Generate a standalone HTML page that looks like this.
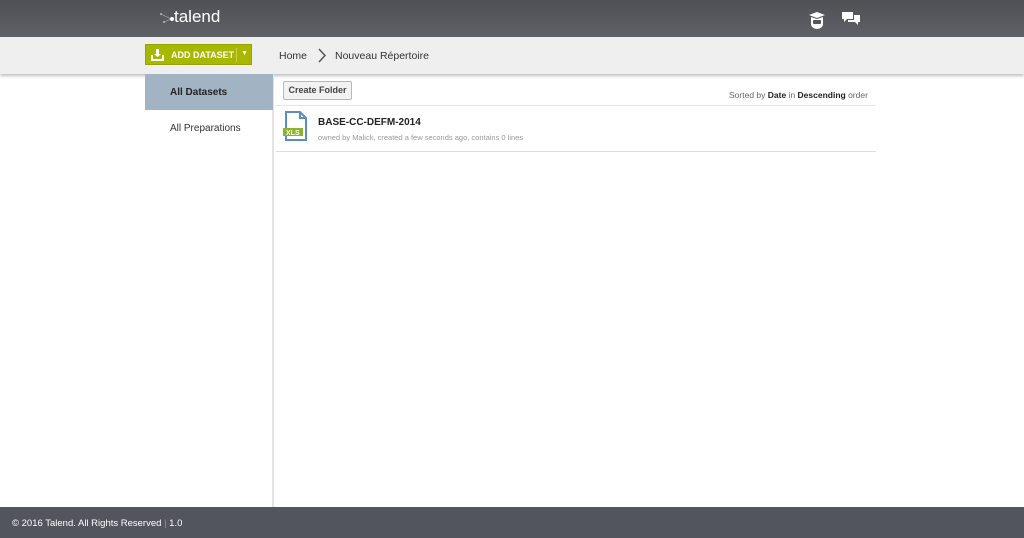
<!DOCTYPE html>
<html><head><meta charset="utf-8"><style>
*{margin:0;padding:0;box-sizing:border-box}
body{width:1024px;height:538px;overflow:hidden;background:#fff;font-family:"Liberation Sans",sans-serif;position:relative}
.hdr{position:absolute;left:0;top:0;width:1024px;height:37px;background:linear-gradient(#4f5056,#606167)}
.sub{position:absolute;left:0;top:37px;width:1024px;height:37px;background:#efefef;box-shadow:0 2px 3px rgba(0,0,0,.25)}
.btn{position:absolute;left:145px;top:7px;width:107px;height:21px;background:#a8b800;border:1px solid #95a400;color:#fff;font-size:9px;font-weight:bold}
.side{position:absolute;left:145px;top:74px;width:129px;height:433px;border-right:2px solid #e4e4e4}
.foot{position:absolute;left:0;top:507px;width:1024px;height:31px;background:#53555d;color:#fff;font-size:9.5px}
</style></head><body>
<div class="hdr">
<div style="position:absolute;left:160px;top:11px;width:14px;height:12px">
<svg width="14" height="12"><g stroke="#9a9ba0" stroke-width=".7"><line x1="1" y1="2" x2="11" y2="7"/><line x1="4" y1="10" x2="11" y2="7"/></g><circle cx="12" cy="7" r="2" fill="#fff"/><circle cx="1" cy="2" r="1" fill="#bbb"/><circle cx="4" cy="10" r="1" fill="#bbb"/></svg></div>
<div style="position:absolute;left:174px;top:7px;color:#fff;font-size:17px">talend</div>
<svg style="position:absolute;left:808px;top:11px" width="18" height="18"><path d="M1 4L9 1L17 4L9 7Z" fill="#fff"/><path d="M3 6v7a6 5 0 0 0 12 0V6L9 8Z" fill="#fff"/><rect x="5" y="9" width="8" height="4" rx="1" fill="#55565c"/></svg>
<svg style="position:absolute;left:841px;top:10px" width="20" height="18"><path d="M1 2h11v7H6l-3 3V9H1Z" fill="#fff"/><path d="M13 5h6v7h-2v3l-3-3H7v-2h6Z" fill="#fff"/></svg>
</div>
<div class="sub">
<div class="btn"><svg style="position:absolute;left:5px;top:4px" width="13" height="12"><path d="M0 6h2v4h9V6h2v6H0Z M5 0h3v5h2L6.5 8 3 5h2Z" fill="#fff"/></svg><span style="position:absolute;left:25px;top:5px">ADD DATASET</span><span style="position:absolute;left:90px;top:3px;width:1px;height:14px;background:#c8d24c"></span><span style="position:absolute;left:95px;top:5px;font-size:7px">▼</span></div>
<div style="position:absolute;left:279px;top:13px;font-size:10.5px;color:#333">Home</div>
<svg style="position:absolute;left:317px;top:11px" width="10" height="15"><path d="M2 1l6 6.5L2 14" stroke="#555" stroke-width="1.5" fill="none"/></svg>
<div style="position:absolute;left:335px;top:13px;font-size:10.5px;color:#333">Nouveau Répertoire</div>
</div>
<div class="side">
<div style="position:absolute;left:0;top:0;width:128px;height:36px;background:#a2b4c4;font-size:10px;font-weight:bold;color:#222;padding:13px 0 0 25px">All Datasets</div>
<div style="position:absolute;left:25px;top:49px;font-size:10px;color:#333">All Preparations</div>
</div>
<div style="position:absolute;left:283px;top:81px;width:69px;height:19px;border:1px solid #b8b8b8;border-radius:2px;background:#f2f2f2;font-size:9px;font-weight:bold;color:#444;text-align:center;line-height:17px">Create Folder</div>
<div style="position:absolute;left:729px;top:90px;font-size:8.5px;color:#666">Sorted by <b style="color:#222">Date</b> in <b style="color:#222">Descending</b> order</div>
<div style="position:absolute;left:276px;top:105px;width:600px;height:1px;background:#e6e6e6"></div>
<div style="position:absolute;left:276px;top:151px;width:600px;height:1px;background:#ddd"></div>
<svg style="position:absolute;left:283px;top:111px" width="26" height="30"><path d="M3 1h14l6 6v22H3Z" fill="#fff" stroke="#5b8fc0" stroke-width="2"/><path d="M17 1v6h6" fill="none" stroke="#5b8fc0" stroke-width="2"/><rect x="0" y="17" width="20" height="8" fill="#8db32a"/><text x="3" y="24" font-size="7" fill="#fff" font-family="Liberation Sans" font-weight="bold">XLS</text></svg>
<div style="position:absolute;left:318px;top:117px;font-size:10px;font-weight:bold;color:#222">BASE-CC-DEFM-2014</div>
<div style="position:absolute;left:318px;top:133px;font-size:7.5px;color:#999">owned by Malick, created a few seconds ago, contains 0 lines</div>
<div class="foot"><div style="position:absolute;left:12px;top:11px">© 2016 Talend. All Rights Reserved <span style="color:#c77">|</span> 1.0</div></div>
</body></html>
